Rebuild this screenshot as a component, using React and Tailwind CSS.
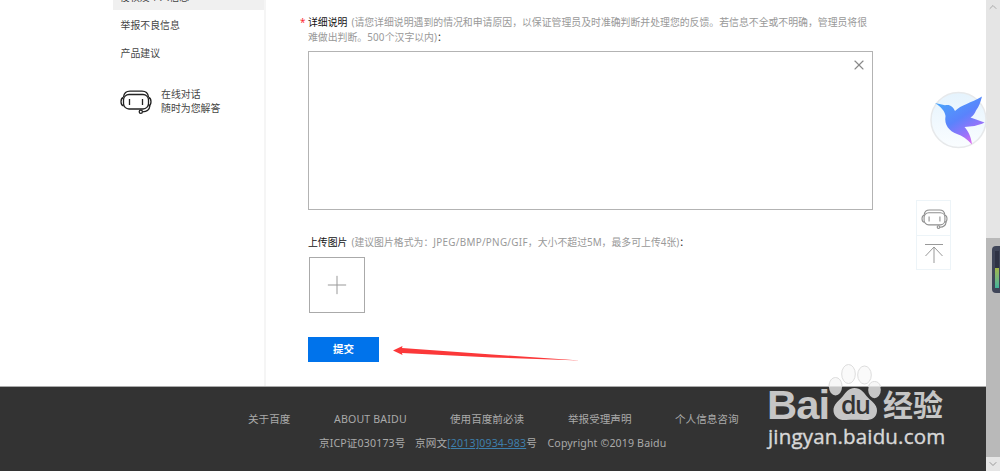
import { ChevronDown, ChevronUp, Plus, X } from "lucide-react"
import { cva } from "class-variance-authority"

const footerLinks = [
  { label: "关于百度", width: "w-[86px]" },
  { label: "ABOUT BAIDU", width: "w-[116px] tracking-[0.16px]" },
  { label: "使用百度前必读", width: "w-[118px]" },
  { label: "举报受理声明", width: "w-[107px]" },
  { label: "个人信息咨询", width: "w-[70px]" },
]

const robot = cva("shrink-0 fill-none", {
  variants: {
    tone: {
      dark: "h-6 w-8 stroke-[#222] stroke-[1.3]",
      light: "h-5 w-[27px] stroke-[#8f8f8f] stroke-[1.3]",
    },
  },
})

function RobotIcon({ tone }) {
  return (
    <svg viewBox="0 0 32 24" className={robot({ tone })}>
      <rect x="3.5" y="4.5" width="25" height="14.5" rx="5.5" />
      <path d="M3.5 7C4 3.5 6.5 1.2 10 1.2h12c3.5 0 6 2.3 6.5 5.8" />
      <path d="M3.5 7.5C1.7 8 1 9.5 1 11.7s.7 3.7 2.5 4.2M28.5 7.5c1.8.5 2.5 2 2.5 4.2s-.7 3.7-2.5 4.2" />
      <path d="M9.5 9v6M22.5 9v6" />
      <path d="M30 15.5c-.5 4.5-3.5 6.300-7.500 6.300" />
      <circle cx="20.8" cy="21.7" r="1.6" />
    </svg>
  )
}

function Sidebar() {
  return (
    <aside className="ml-[113px] w-[153px] shrink-0 border-r-2 border-[#f5f5f5] text-[9.9px] text-[#444]">
      <div className="h-[10px] overflow-hidden bg-[#f0f0f0] pl-[7px]">
        <div className="-mt-[11px] h-4 leading-4 whitespace-nowrap">侵权及个人信息</div>
      </div>
      <nav className="flex flex-col pl-[7.5px]">
        <a className="h-7 leading-[30px]">举报不良信息</a>
        <a className="h-7 leading-[30px]">产品建议</a>
      </nav>
      <div className="mt-[22px] flex items-center gap-[9px] pl-[7px]">
        <RobotIcon tone="dark" />
        <p className="leading-[13.5px]">
          在线对话
          <br />
          随时为您解答
        </p>
      </div>
    </aside>
  )
}

function FeedbackForm() {
  return (
    <main className="ml-[42px] w-[566px] shrink-0 text-[9.87px] text-[#999]">
      <div className="relative mt-[15px] h-[29px] leading-[15px] whitespace-nowrap">
        <span className="absolute top-0 -left-2 text-red-500">*</span>
        <span className="mr-1 text-[#111]">详细说明</span>
        (请您详细说明遇到的情况和申请原因，以保证管理员及时准确判断并处理您的反馈。若信息不全或不明确，管理员将很
        <br />
        难做出判断。<span className="tracking-[0.2px]">500</span>个汉字以内)<span className="text-[#333]">：</span>
      </div>
      <div className="mt-[7px] flex h-[159px] w-[565px] justify-end border border-[#b3b3b3] px-[5px] py-[5px]">
        <X className="size-4 text-[#888]" strokeWidth={1.7} />
      </div>
      <div className="mt-[25px] h-[15px] leading-[15px] whitespace-nowrap">
        <span className="mr-1 text-[#111]">上传图片</span>
        (建议图片格式为：<span className="tracking-[0.29px]">JPEG/BMP/PNG/GIF</span>，大小不超过5M，最多可上传4张)<span className="text-[#333]">：</span>
      </div>
      <div className="mt-[7px] ml-px flex size-14 items-center justify-center border border-[#aaa]">
        <Plus className="size-[30px] text-[#999]" strokeWidth={0.8} />
      </div>
      <div className="mt-6 flex h-[25px] items-center">
        <button className="h-[25px] w-[71px] bg-[#0073eb] pt-px text-[10.5px] font-bold text-white">提交</button>
        <svg viewBox="0 0 190 20" className="ml-[13px] h-5 w-[190px] overflow-visible">
          <path d="M1 10.500 10.500 6 10 8 100 14.500 188 20.500 100 17.500 10 13 10.500 15Z" fill="#fb3839" />
        </svg>
      </div>
    </main>
  )
}

function Bird() {
  return (
    <svg viewBox="0 0 58 58" className="absolute top-[91px] left-[929px] size-[58px]">
      <defs>
        <linearGradient id="bird" x1="0.1" y1="0" x2="0.75" y2="1">
          <stop offset="0" stopColor="#48aafa" />
          <stop offset="0.5" stopColor="#5a83fc" />
          <stop offset="0.8" stopColor="#9b72fa" />
          <stop offset="1" stopColor="#e56bec" />
        </linearGradient>
        <linearGradient id="disc" x1="0" y1="0" x2="0" y2="1">
          <stop offset="0" stopColor="#e5f3fd" />
          <stop offset="1" stopColor="#fafdff" />
        </linearGradient>
      </defs>
      <circle cx="29.5" cy="29" r="27.5" fill="url(#disc)" stroke="#e7e9eb" strokeWidth="1.5" />
      <path d="M6 12 16 14.200C21 13 24 15.500 26 20 32 14 42 12 53 5.500 51.500 11 50 16 47 19.500 46 22 44 25 41.500 26.500L55.500 31.500C49 35 42 35.500 35.500 36 39 40 42 45 43 53.500 38 48 33 44.500 28 43 20 40 15 34 16.500 25 16 20 12 16 6 12Z" fill="url(#bird)" />
    </svg>
  )
}

function SideTools() {
  return (
    <div className="absolute top-[200px] left-[916px] w-[35px] border border-[#edf4f8] bg-white">
      <div className="flex h-[35px] items-center justify-center border-b border-[#edf4f8] pt-px pl-px">
        <RobotIcon tone="light" />
      </div>
      <div className="flex h-[33px] items-center justify-center pl-px">
        <svg viewBox="0 0 20 22" className="h-[22px] w-5 fill-none stroke-[#999]">
          <path d="M1 2.500h18M10 5v16M1.500 14 10 5l8.500 9" />
        </svg>
      </div>
    </div>
  )
}

function Watermark() {
  return (
    <div className="absolute top-[362px] left-[766px] h-[90px] w-[184px] text-[#c6c6c6]">
      <span className="absolute top-[20px] left-px origin-left scale-x-[1.02] font-['Liberation_Sans'] text-[41px] leading-[46px] font-bold tracking-[-1px]">Bai</span>
      <svg viewBox="0 0 56 62" className="absolute top-0 left-[62px] h-[62px] w-14">
        <g fill="#ddd" fillOpacity="0.15" stroke="#ddd">
          <ellipse cx="20.5" cy="12" rx="6.8" ry="9.5" />
          <ellipse cx="36.5" cy="13" rx="6.8" ry="9" />
        </g>
        <g fill="#c6c6c6">
          <ellipse cx="7.5" cy="25" rx="6.5" ry="8.5" />
          <ellipse cx="46.5" cy="28" rx="6.3" ry="8.3" />
          <path d="M26.500 26c6 0 9 4 12 8 4 5 11 8 10.500 15-.5 7-6 9.500-13 9-6-.5-13-.5-18 0-7 .6-12-3-12.500-9C5 42 11 39 15 34c3-4 6-8 11.500-8Z" />
        </g>
        <path d="M1 24.500C1 19 4 15.500 7.500 15.500S14 19 14 24.500Z" fill="#f7f7f7" stroke="#ddd" />
        <path d="M40.500 24.500C41.500 21 43.500 19.500 46.500 19.500s5 1.500 6 5Z" fill="#f7f7f7" stroke="#ddd" />
      </svg>
      <span className="absolute top-[29px] left-[75px] font-['Open_Sans'] text-[25px] leading-[26px] font-semibold tracking-[-1.5px] text-[#333]">du</span>
      <span className="absolute top-[25px] left-[117px] text-[30px] leading-[36px] font-bold">经验</span>
      <span className="absolute top-[62px] left-[2px] font-['Open_Sans'] text-[20.5px] leading-6 font-medium tracking-[0.17px] whitespace-nowrap text-[#d8d8d8] [-webkit-text-stroke:0.4px_#d8d8d8]">jingyan.baidu.com</span>
    </div>
  )
}

function Scrollbar() {
  return (
    <div className="relative flex w-[14px] shrink-0 flex-col items-center bg-[#e5e5e5]">
      <ChevronUp className="mt-px size-3 text-[#aaa]" />
      <div className="mt-[225px] h-[219px] w-full bg-[#b9b9b9]" />
      <ChevronDown className="mt-px size-3 text-[#999]" />
      <div className="absolute top-[246px] right-0 h-[47px] w-2 rounded-l bg-[#3f4558] py-[5px] pl-[3px]">
        <div className="h-[17px] w-1 bg-[#2e3244]" />
        <div className="h-5 w-1 bg-linear-to-b from-[#a0b647] to-[#3eb29b]" />
      </div>
    </div>
  )
}

export default function App() {
  return (
    <div className="relative flex h-[471px] w-[1000px] overflow-hidden bg-white font-['Noto_Sans','Noto_Sans_CJK_SC',sans-serif]">
      <div className="flex w-[986px] shrink-0 flex-col">
        <div className="flex h-[386px] shrink-0">
          <Sidebar />
          <FeedbackForm />
        </div>
        <footer className="h-[85px] border-t border-[#aaa] bg-[#333] text-[10.6px] text-[#aaa]">
          <div className="mt-6 ml-[248px] flex h-4 leading-4 whitespace-nowrap">
            {footerLinks.map((link) => (
              <a key={link.label} className={link.width}>{link.label}</a>
            ))}
          </div>
          <div className="mt-2 ml-[319px] flex h-4 leading-4 tracking-[0.14px] whitespace-nowrap">
            <span className="w-24">京ICP证030173号</span>
            <span className="w-[132.5px]">
              京网文<a className="text-[#3e7fac] underline">[2013]0934-983</a>号
            </span>
            <span>Copyright ©2019 Baidu</span>
          </div>
        </footer>
      </div>
      <Scrollbar />
      <Bird />
      <SideTools />
      <Watermark />
    </div>
  )
}
